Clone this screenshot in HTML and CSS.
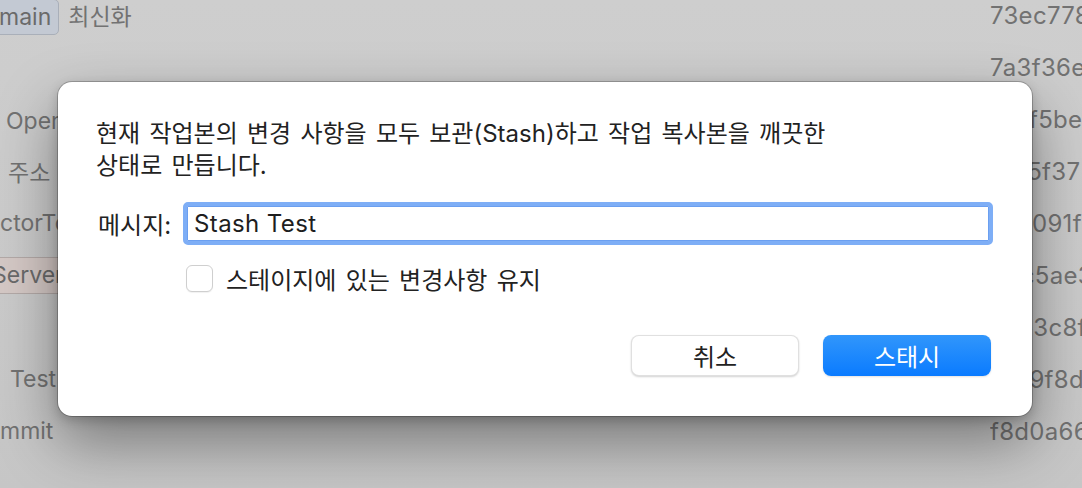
FILE: index.html
```html
<!DOCTYPE html>
<html lang="ko">
<head>
<meta charset="utf-8">
<title>Stash</title>
<link rel="stylesheet" href="styles.css">
</head>
<body>
<div class="history">
  <div class="row">
    <div class="left"><span class="badge badge-main">main</span><span class="subject">최신화</span></div>
    <div class="hash">73ec778</div>
  </div>
  <div class="row">
    <div class="left"></div>
    <div class="hash">7a3f36e</div>
  </div>
  <div class="row">
    <div class="left"><span class="subject indent-6">Open 설정</span></div>
    <div class="hash">1c2f5be</div>
  </div>
  <div class="row">
    <div class="left"><span class="subject indent-8">주소 변경</span></div>
    <div class="hash">a1e5f37</div>
  </div>
  <div class="row">
    <div class="left"><span class="subject indent-0">ctorTools</span></div>
    <div class="hash">b7e091f</div>
  </div>
  <div class="row">
    <div class="left"><span class="badge badge-server">Server</span></div>
    <div class="hash">d4c5ae3</div>
  </div>
  <div class="row">
    <div class="left"></div>
    <div class="hash">a6e3c8f</div>
  </div>
  <div class="row">
    <div class="left"><span class="subject indent-10">Test</span></div>
    <div class="hash">41c9f8d</div>
  </div>
  <div class="row">
    <div class="left"><span class="subject indent-0">mmit</span></div>
    <div class="hash">f8d0a66</div>
  </div>
</div>

<div class="dialog">
  <p class="message">현재 작업본의 변경 사항을 모두 보관(Stash)하고 작업 복사본을 깨끗한<br>상태로 만듭니다.</p>
  <div class="field-row">
    <label class="field-label">메시지:</label>
    <div class="field-input">Stash Test</div>
  </div>
  <div class="check-row">
    <span class="checkbox"></span>
    <span class="check-label">스테이지에 있는 변경사항 유지</span>
  </div>
  <div class="button-row">
    <button class="btn btn-cancel">취소</button>
    <button class="btn btn-primary">스태시</button>
  </div>
</div>
</body>
</html>
```

FILE: styles.css
```css
html, body {
  margin: 0;
  padding: 0;
  height: 100%;
  overflow: hidden;
}

body {
  font-family: "Inter", "Noto Sans CJK KR", sans-serif;
  background: linear-gradient(180deg, #cecece 0%, #cacaca 60%, #c6c6c6 100%);
  position: relative;
}

.history {
  display: flex;
  flex-direction: column;
  margin-top: -11px;
}

.row {
  height: 52px;
  display: flex;
  align-items: center;
  font-size: 23px;
  color: #727272;
}

.left {
  flex: 1;
  display: flex;
  align-items: center;
  white-space: nowrap;
  overflow: hidden;
}

.hash {
  width: 92px;
  white-space: nowrap;
  overflow: hidden;
  font-size: 24px;
  letter-spacing: 0.3px;
}

.badge {
  height: 36px;
  box-sizing: border-box;
  display: inline-flex;
  align-items: center;
  border-radius: 5px;
  color: #6a6a6a;
}

.badge-main {
  margin-left: -8px;
  padding: 0 7px 0 6px;
  background: #c3c9d3;
  border: 1px solid #a9afb9;
  margin-top: 4px;
}

.badge-server {
  margin-left: -10px;
  padding: 0 12px 0 2px;
  background: #d4c8c5;
  border-top: 1px solid #b3a9a7;
  border-bottom: 1px solid #b3a9a7;
  border-radius: 0;
  height: 37px;
  width: 140px;
}

.subject {
  margin-left: 9px;
}

.indent-0 { margin-left: 0; }
.indent-6 { margin-left: 6px; }
.indent-8 { margin-left: 8px; }
.indent-10 { margin-left: 10px; }

.dialog {
  position: absolute;
  left: 58px;
  top: 82px;
  width: 974px;
  height: 334px;
  box-sizing: border-box;
  padding: 36px 41px 0 38px;
  background: #ffffff;
  border-radius: 14px;
  box-shadow: 0 0 0 1px rgba(0, 0, 0, 0.22), 0 26px 60px rgba(0, 0, 0, 0.4), 0 4px 12px rgba(0, 0, 0, 0.2);
  color: #222222;
  font-size: 24px;
  word-spacing: 2.5px;
  display: flex;
  flex-direction: column;
}

.message {
  margin: 0;
  line-height: 32px;
  white-space: nowrap;
}

.field-row {
  display: flex;
  align-items: center;
  margin-top: 20px;
  height: 43px;
}

.field-label {
  margin-left: 2px;
  width: 85px;
}

.field-input {
  flex: 1;
  height: 43px;
  box-sizing: border-box;
  border: 4px solid #7eaef6;
  border-radius: 5px;
  box-shadow: inset 0 0 0 1px #6b9ff0;
  padding: 0 7px;
  display: flex;
  align-items: center;
  font-size: 24px;
  letter-spacing: 0.4px;
  word-spacing: 0;
  color: #1e1e1e;
  margin-right: -2px;
}

.check-row {
  display: flex;
  align-items: center;
  margin-top: 19px;
  margin-left: 90px;
  height: 28px;
}

.checkbox {
  width: 27px;
  height: 27px;
  box-sizing: border-box;
  border: 1px solid #cfcfcf;
  border-radius: 6px;
  background: #ffffff;
  box-shadow: 0 1px 1px rgba(0, 0, 0, 0.06);
}

.check-label {
  margin-left: 13px;
}

.button-row {
  display: flex;
  justify-content: flex-end;
  gap: 24px;
  margin-top: 43px;
}

.btn {
  width: 168px;
  height: 41px;
  border-radius: 8px;
  font-family: "Inter", "Noto Sans CJK KR", sans-serif;
  font-size: 24px;
  padding: 0;
  display: flex;
  align-items: center;
  justify-content: center;
}

.btn-cancel {
  background: #ffffff;
  color: #222222;
  border: 1px solid rgba(0, 0, 0, 0.12);
  box-shadow: 0 1px 2px rgba(0, 0, 0, 0.18);
}

.btn-primary {
  background: linear-gradient(180deg, #3196fb 0%, #0a7bff 100%);
  color: #ffffff;
  border: none;
  box-shadow: 0 1px 2px rgba(0, 0, 0, 0.12);
}
```
